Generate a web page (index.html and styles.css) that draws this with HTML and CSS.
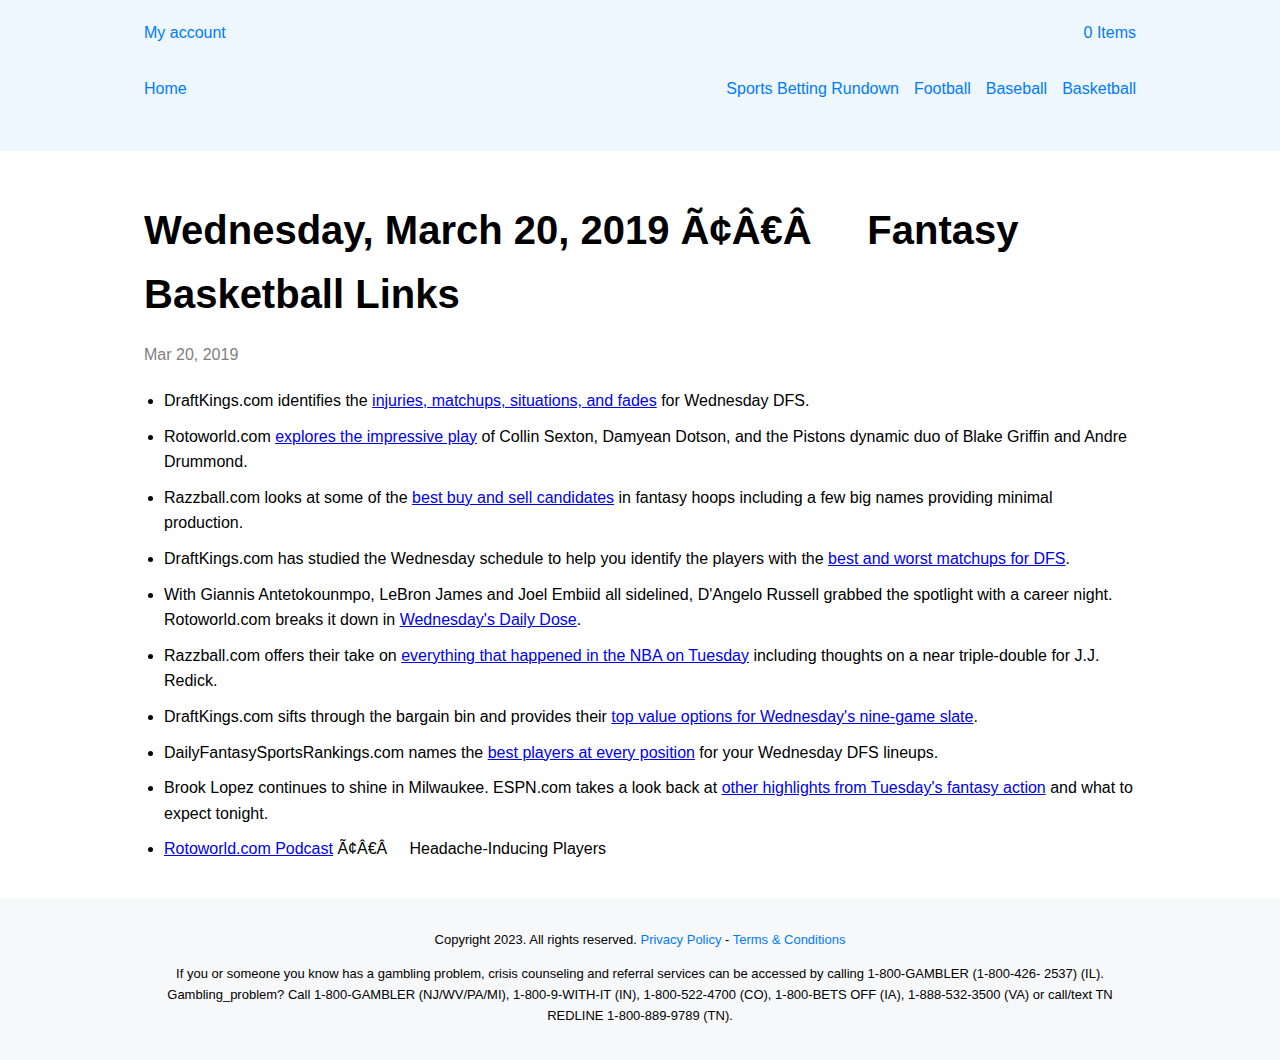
FILE: index.html
```html
<!DOCTYPE html>
<html lang="en">
<head>
<meta charset="utf-8">
<title>Wednesday, March 20, 2019 Fantasy Basketball Links</title>
<link rel="stylesheet" href="styles.css">
</head>
<body>
<header class="site-header">
  <div class="container">
    <div class="top-row">
      <a href="#" class="hlink">My account</a>
      <a href="#" class="hlink">0 Items</a>
    </div>
    <nav class="nav-row">
      <a href="#" class="hlink">Home</a>
      <div class="nav-links">
        <a href="#" class="hlink">Sports Betting Rundown</a>
        <a href="#" class="hlink">Football</a>
        <a href="#" class="hlink">Baseball</a>
        <a href="#" class="hlink">Basketball</a>
      </div>
    </nav>
  </div>
</header>
<main class="container main">
  <h1 class="title">Wednesday, March 20, 2019 Ã¢Â€Â&nbsp;&nbsp;&nbsp;&nbsp; Fantasy Basketball Links</h1>
  <p class="date">Mar 20, 2019</p>
  <ul class="links">
    <li>DraftKings.com identifies the <a href="#">injuries, matchups, situations, and fades</a> for Wednesday DFS.</li>
    <li>Rotoworld.com <a href="#">explores the impressive play</a> of Collin Sexton, Damyean Dotson, and the Pistons dynamic duo of Blake Griffin and Andre Drummond.</li>
    <li>Razzball.com looks at some of the <a href="#">best buy and sell candidates</a> in fantasy hoops including a few big names providing minimal production.</li>
    <li>DraftKings.com has studied the Wednesday schedule to help you identify the players with the <a href="#">best and worst matchups for DFS</a>.</li>
    <li>With Giannis Antetokounmpo, LeBron James and Joel Embiid all sidelined, D'Angelo Russell grabbed the spotlight with a career night. Rotoworld.com breaks it down in <a href="#">Wednesday's Daily Dose</a>.</li>
    <li>Razzball.com offers their take on <a href="#">everything that happened in the NBA on Tuesday</a> including thoughts on a near triple-double for J.J. Redick.</li>
    <li>DraftKings.com sifts through the bargain bin and provides their <a href="#">top value options for Wednesday's nine-game slate</a>.</li>
    <li>DailyFantasySportsRankings.com names the <a href="#">best players at every position</a> for your Wednesday DFS lineups.</li>
    <li>Brook Lopez continues to shine in Milwaukee. ESPN.com takes a look back at <a href="#">other highlights from Tuesday's fantasy action</a> and what to expect tonight.</li>
    <li><a href="#">Rotoworld.com Podcast</a> Ã¢Â€Â&nbsp;&nbsp;&nbsp;&nbsp; Headache-Inducing Players</li>
  </ul>
</main>
<footer class="site-footer">
  <div class="container">
    <p class="copy">Copyright 2023. All rights reserved. <a href="#" class="hlink">Privacy Policy</a> - <a href="#" class="hlink">Terms &amp; Conditions</a></p>
    <p class="warn">If you or someone you know has a gambling problem, crisis counseling and referral services can be accessed by calling 1-800-GAMBLER (1-800-426- 2537) (IL). Gambling_problem? Call 1-800-GAMBLER (NJ/WV/PA/MI), 1-800-9-WITH-IT (IN), 1-800-522-4700 (CO), 1-800-BETS OFF (IA), 1-888-532-3500 (VA) or call/text TN REDLINE 1-800-889-9789 (TN).</p>
  </div>
</footer>
</body>
</html>
```

FILE: styles.css
```css
html, body {
  margin: 0;
  padding: 0;
}
body {
  font-family: "Liberation Sans", Arial, sans-serif;
  font-size: 16px;
  line-height: 24px;
  color: #000;
  background: #fff;
}
.container {
  width: 992px;
  margin: 0 auto;
}
.site-header {
  background: #eef7fe;
  height: 151px;
  box-sizing: border-box;
  padding-top: 21px;
}
.hlink {
  color: #007bff;
  text-decoration: none;
}
.top-row {
  display: flex;
  justify-content: space-between;
}
.nav-row {
  display: flex;
  justify-content: space-between;
  margin-top: 32px;
}
.nav-links {
  display: flex;
  gap: 15px;
}
.main {
  padding-top: 47px;
  padding-bottom: 36px;
}
.title {
  margin: 0;
  font-size: 40px;
  line-height: 64px;
  font-weight: bold;
}
.date {
  margin: 17px 0 0;
  color: #808080;
}
.links {
  margin: 21px 0 0;
  padding-left: 20px;
}
.links li {
  line-height: 25.6px;
  margin-bottom: 10px;
}
.links li:last-child {
  margin-bottom: 0;
}
.links a {
  color: #0000ee;
  text-decoration: underline;
}
.site-footer {
  background: #f7f8fa;
  padding: 31px 0 34px;
  text-align: center;
  font-size: 13px;
  line-height: 21px;
}
.site-footer p {
  margin: 0;
}
.site-footer .warn {
  margin-top: 13px;
}
```
